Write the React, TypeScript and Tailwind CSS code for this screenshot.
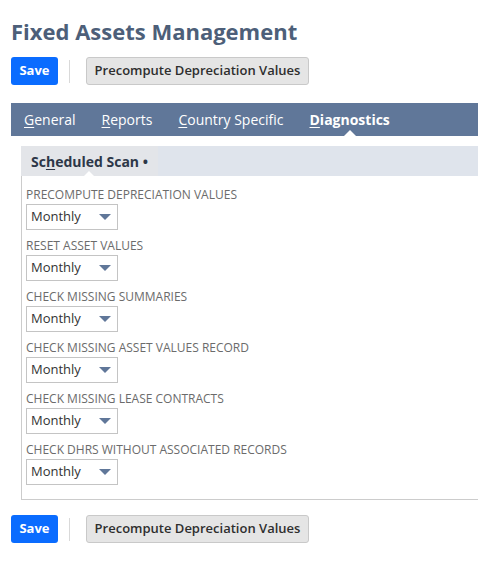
import React from 'react';

const font = { fontFamily: '"Open Sans", "Liberation Sans", sans-serif' };

const fields = [
  'Precompute Depreciation Values',
  'Reset Asset Values',
  'Check Missing Summaries',
  'Check Missing Asset Values Record',
  'Check Missing Lease Contracts',
  'Check DHRs Without Associated Records',
];

const ButtonRow = () => (
  <div className="flex items-center h-[28px]">
    <button className="h-[28px] w-[47px] rounded-[3px] bg-[#0a6cff] text-white text-[13px] font-bold">
      Save
    </button>
    <div className="w-px h-[23px] bg-[#d9d9d9] ml-[11px] mr-[16px]" />
    <button className="h-[28px] w-[223px] rounded-[3px] bg-[#e5e5e5] border border-[#c9c9c9] text-[#2e2e2e] text-[13px] font-semibold">
      Precompute Depreciation Values
    </button>
  </div>
);

const Tab = ({ label, active }: { label: string; active?: boolean }) => (
  <div className={`relative px-[13px] h-full flex items-center text-[14px] text-white ${active ? 'font-bold' : ''}`}>
    <span>
      <span className="underline underline-offset-2">{label[0]}</span>
      {label.slice(1)}
    </span>
    {active && (
      <div className="absolute bottom-0 left-1/2 -translate-x-1/2 w-0 h-0 border-l-[6px] border-r-[6px] border-b-[6px] border-l-transparent border-r-transparent border-b-white" />
    )}
  </div>
);

const Select = () => (
  <div className="w-[92px] h-[26px] border border-[#c4c4c4] bg-white flex items-center justify-between pl-[4px] pr-[6px]">
    <span className="text-[13px] text-[#333]">Monthly</span>
    <svg width="12" height="6" viewBox="0 0 12 6">
      <path d="M0 0 H12 L6 6 Z" fill="#607799" />
    </svg>
  </div>
);

export default function App() {
  return (
    <div className="min-h-screen bg-white overflow-hidden" style={font}>
      <div className="pl-[11px] pt-[14px]">
        <h1 className="text-[22px] font-bold text-[#4d5f79] leading-[34px]">Fixed Assets Management</h1>
        <div className="mt-[9px]">
          <ButtonRow />
        </div>
        <div className="mt-[18px] h-[33px] bg-[#607799] flex items-center">
          <Tab label="General" />
          <Tab label="Reports" />
          <Tab label="Country Specific" />
          <Tab label="Diagnostics" active />
        </div>
        <div className="ml-[10px] mt-[10px]">
          <div className="h-[30px] bg-[#dfe4ec] flex">
            <div className="relative h-full bg-[#e3e5e9] px-[10px] flex items-center text-[14px] font-bold text-[#2d3748]">
              <span>
                Sc<span className="underline underline-offset-2">h</span>eduled Scan •
              </span>
              <div className="absolute bottom-0 left-1/2 -translate-x-1/2 w-0 h-0 border-l-[5px] border-r-[5px] border-b-[5px] border-l-transparent border-r-transparent border-b-white" />
            </div>
          </div>
          <div className="border-l border-b border-[#cccccc] pl-[4px] pt-[11px] pb-[14px] flex flex-col gap-[8px]">
            {fields.map((f) => (
              <div key={f} className="flex flex-col gap-[1px]">
                <div className="text-[12px] uppercase text-[#6b6b6b] leading-[16px]">{f}</div>
                <Select />
              </div>
            ))}
          </div>
        </div>
        <div className="mt-[15px]">
          <ButtonRow />
        </div>
      </div>
    </div>
  );
}
